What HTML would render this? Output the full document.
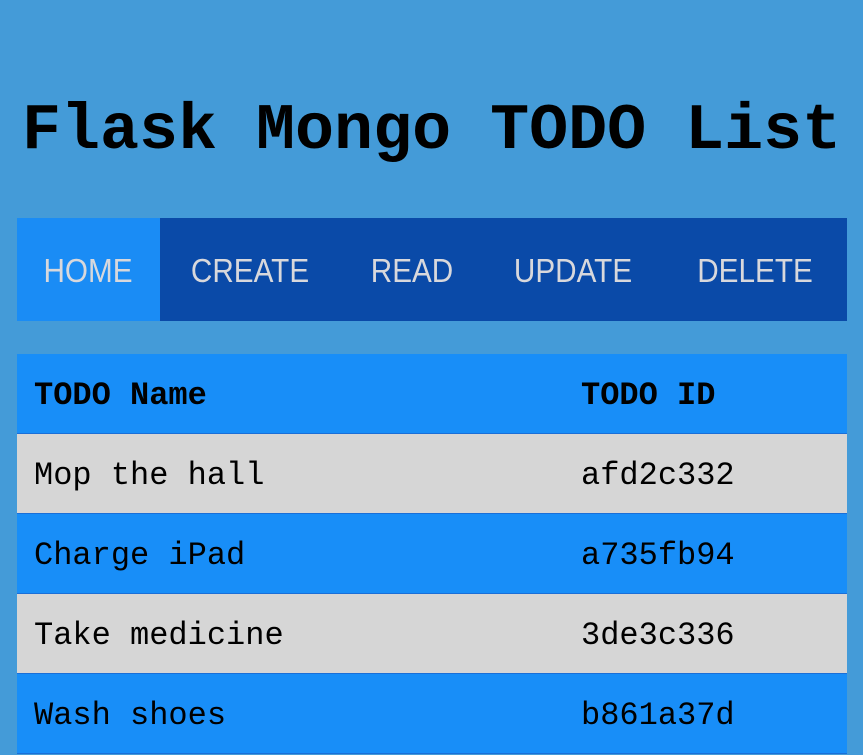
<!DOCTYPE html>
<html><head><style>
body{margin:0;width:863px;height:755px;overflow:hidden;background:#449bd8;font-family:"Liberation Mono",monospace;position:relative}
h1{position:absolute;left:22px;top:91px;margin:0;font-size:65px;font-weight:bold;line-height:80px;color:#000;white-space:nowrap;letter-spacing:0}
.nav{position:absolute;left:17px;top:218px;width:830px;height:103px;background:#0a4aa8}
.home{position:absolute;left:0;top:0;width:143px;height:103px;background:#1a8cf5}
.nav span{position:absolute;top:33px;font-family:"Liberation Sans",sans-serif;font-size:33px;line-height:40px;color:#d8d8dc;transform:translateX(-50%) scaleX(0.9);white-space:nowrap}
.tbl{position:absolute;left:17px;top:354px;width:830px}
.r{height:79px;border-bottom:1px solid #1a6fd8;position:relative;font-size:32px}
.r div{position:absolute;top:22px;line-height:40px}
.h{background:#188ef8;font-weight:bold}
.g{background:#d6d6d6}
.b{background:#188ef8}
</style></head><body>
<h1>Flask Mongo TODO List</h1>
<div class="nav"><div class="home"></div>
<span style="left:71px">HOME</span>
<span style="left:233px">CREATE</span>
<span style="left:395px">READ</span>
<span style="left:556px">UPDATE</span>
<span style="left:738px">DELETE</span>
</div>
<div class="tbl">
<div class="r h"><div style="left:17px">TODO Name</div><div style="left:564px">TODO ID</div></div>
<div class="r g"><div style="left:17px">Mop the hall</div><div style="left:564px">afd2c332</div></div>
<div class="r b"><div style="left:17px">Charge iPad</div><div style="left:564px">a735fb94</div></div>
<div class="r g"><div style="left:17px">Take medicine</div><div style="left:564px">3de3c336</div></div>
<div class="r b"><div style="left:17px">Wash shoes</div><div style="left:564px">b861a37d</div></div>
</div>
</body></html>
